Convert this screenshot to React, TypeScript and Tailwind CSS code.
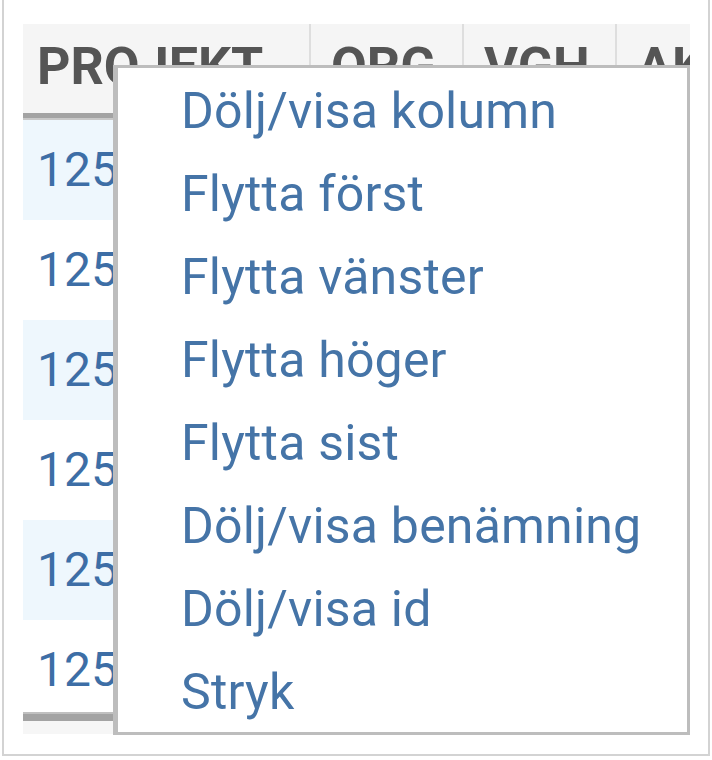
import React from 'react';

const columns = [
  { label: 'PROJEKT', width: 'w-[286px]' },
  { label: 'ORG', width: 'w-[153px]' },
  { label: 'VGH', width: 'w-[153px]' },
  { label: 'AKT', width: 'w-[75px]' },
];

const rows = ['125401', '125402', '125403', '125404', '125405', '125406'];

const menuItems = [
  'Dölj/visa kolumn',
  'Flytta först',
  'Flytta vänster',
  'Flytta höger',
  'Flytta sist',
  'Dölj/visa benämning',
  'Dölj/visa id',
  'Stryk',
];

export default function App() {
  return (
    <div
      className="relative w-[712px] h-[760px] bg-white overflow-hidden"
      style={{ fontFamily: 'Roboto, "Noto Sans", Arial, sans-serif' }}
    >
      {/* Outer panel frame */}
      <div className="ml-[2px] w-[708px] h-[756px] border-l-2 border-r-2 border-b-2 border-[#d3d3d3] pt-[24px] pl-[19px]">
        <div className="w-[667px] overflow-hidden">
          {/* Header */}
          <div className="flex h-[89px] bg-[#f5f5f5]">
            {columns.map((col, i) => (
              <div
                key={col.label}
                className={`${col.width} shrink-0 overflow-hidden whitespace-nowrap pt-[17px] text-[52px] font-bold leading-none text-[#555555] ${
                  i === 0 ? 'pl-[14px]' : 'pl-[20px] border-l-2 border-[#dedede]'
                }`}
              >
                {col.label}
              </div>
            ))}
          </div>
          <div className="h-[7px] bg-[#a3a3a3] border-b-2 border-[#c8c8c8]" />

          {/* Rows */}
          {rows.map((r, i) => (
            <div
              key={r}
              className={`flex ${i === 5 ? 'h-[92px]' : 'h-[100px]'} ${i % 2 === 0 ? 'bg-[#eef7fd]' : 'bg-white'}`}
            >
              <div className="pl-[14px] text-[48px] leading-[100px] text-[#3d6ea6] whitespace-nowrap">{r}</div>
            </div>
          ))}

          {/* Bottom scrollbar */}
          <div className="h-[9px] bg-[#a3a3a3] border-t-2 border-[#c0c0c0]" />
          <div className="h-[13px] bg-[#f6f6f6]" />
        </div>
      </div>

      {/* Context menu */}
      <div className="absolute left-[113px] top-[65px] w-[577px] h-[670px] bg-white border-l-[5px] border-t-[3px] border-r-[3px] border-b-[3px] border-[#bdbdbd]">
        <ul className="pt-[2px]">
          {menuItems.map((item) => (
            <li
              key={item}
              className="pl-[63px] h-[83px] text-[50px] tracking-[0.2px] leading-[83px] text-[#4574a7] whitespace-nowrap"
            >
              {item}
            </li>
          ))}
        </ul>
      </div>
    </div>
  );
}
